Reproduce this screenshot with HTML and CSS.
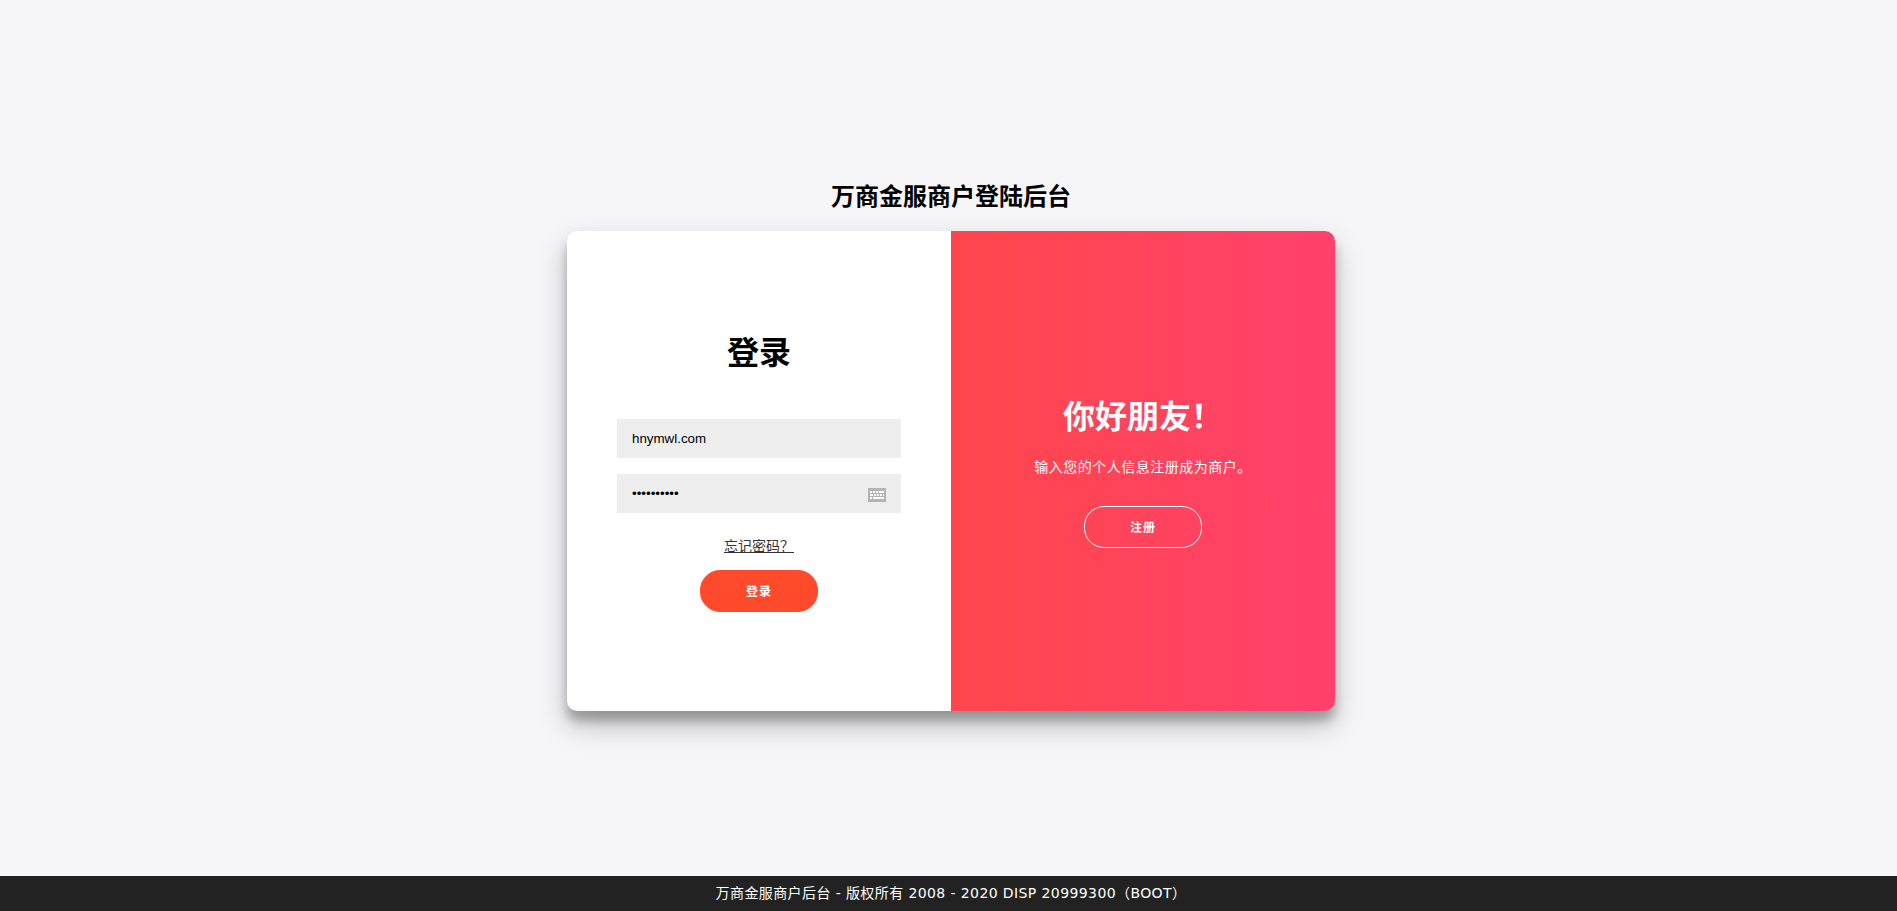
FILE: index.html
```html
<!DOCTYPE html>
<html lang="zh-CN">
<head>
<meta charset="utf-8">
<title>万商金服商户登陆后台</title>
<link rel="stylesheet" href="styles.css">
</head>
<body>
<main class="page">
  <h2 class="site-title">万商金服商户登陆后台</h2>
  <div class="card">
    <form class="panel panel-login">
      <h1 class="heading">登录</h1>
      <input class="field" type="text" value="hnymwl.com">
      <div class="field-wrap">
        <input class="field" type="password" value="1234567890">
        <svg class="kbd-icon" width="18" height="14" viewBox="0 0 18 14" aria-hidden="true">
          <rect width="18" height="14" fill="#b3b3b3"/>
          <g fill="#fff">
            <rect x="2" y="3" width="2" height="2"/><rect x="5" y="3" width="2" height="2"/><rect x="8" y="3" width="2" height="2"/><rect x="11" y="3" width="5" height="2"/>
            <rect x="2" y="6" width="3" height="2"/><rect x="6" y="6" width="2" height="2"/><rect x="9" y="6" width="2" height="2"/><rect x="12" y="6" width="2" height="2"/><rect x="15" y="6" width="1" height="2"/>
            <rect x="2" y="9" width="2" height="2"/><rect x="5" y="9" width="11" height="2"/>
          </g>
        </svg>
      </div>
      <a class="forgot" href="#">忘记密码？</a>
      <button class="btn btn-solid" type="button">登录</button>
    </form>
    <div class="panel panel-welcome">
      <h1 class="heading">你好朋友！</h1>
      <p class="lead">输入您的个人信息注册成为商户。</p>
      <button class="btn btn-ghost" type="button">注册</button>
    </div>
  </div>
</main>
<footer class="footer">万商金服商户后台 - 版权所有 2008 - 2020 DISP 20999300（BOOT）</footer>
</body>
</html>
```

FILE: styles.css
```css
* { box-sizing: border-box; }

html, body { height: 100%; }

body {
  margin: 0;
  display: flex;
  flex-direction: column;
  background: #f6f5f7;
  font-family: "Inter", "Noto Sans CJK SC", sans-serif;
  color: #000;
  overflow: hidden;
}

.page {
  flex: 1;
  display: flex;
  flex-direction: column;
  align-items: center;
  justify-content: center;
  padding-left: 5px;
}

.site-title {
  margin: 0;
  padding: 14px 0 17px;
  font-size: 24px;
  line-height: 35px;
  font-weight: 700;
  text-align: center;
}

.card {
  width: 768px;
  height: 480px;
  display: flex;
  background: #fff;
  border-radius: 10px;
  overflow: hidden;
  box-shadow: 0 14px 28px rgba(0, 0, 0, .25), 0 10px 10px rgba(0, 0, 0, .22);
}

.panel {
  width: 50%;
  display: flex;
  flex-direction: column;
  align-items: center;
  justify-content: center;
  padding: 0 50px;
  text-align: center;
}

.panel-welcome {
  color: #fff;
  background: linear-gradient(to right, #ff4b2b, #ff416c) right center / 200% 100% no-repeat;
}

.heading {
  margin: 0;
  font-size: 32px;
  line-height: 46px;
  font-weight: 700;
}

.panel-login .heading { margin-bottom: 35px; }

.field-wrap {
  position: relative;
  width: 100%;
}

.field {
  display: block;
  width: 100%;
  height: 39px;
  margin: 8px 0;
  padding: 12px 15px;
  border: none;
  outline: none;
  border-radius: 0;
  background: #eee;
  font-family: "Liberation Sans", sans-serif;
  font-size: 13.333px;
  color: #000;
}

.kbd-icon {
  position: absolute;
  top: 22px;
  right: 15px;
}

.forgot {
  margin: 15px 0;
  font-size: 14px;
  line-height: 19px;
  color: #333;
  text-decoration: underline;
}

.btn {
  width: 118px;
  height: 42px;
  padding: 0 0 2px;
  border-radius: 20px;
  font-family: inherit;
  font-size: 12px;
  font-weight: 700;
  letter-spacing: 1px;
  color: #fff;
  cursor: pointer;
}

.btn-solid {
  border: 1px solid #ff4b2b;
  background: #ff4b2b;
}

.btn-ghost {
  border: 1px solid #fff;
  background: transparent;
}

.lead {
  margin: 17px 0 29px;
  font-size: 14px;
  line-height: 20px;
  font-weight: 400;
  letter-spacing: .5px;
}

.footer {
  height: 35px;
  padding-left: 5px;
  background: #222;
  color: #fff;
  font-family: "DejaVu Sans", "Noto Sans CJK SC", sans-serif;
  font-size: 14px;
  line-height: 35px;
  letter-spacing: .4px;
  text-align: center;
}
```
